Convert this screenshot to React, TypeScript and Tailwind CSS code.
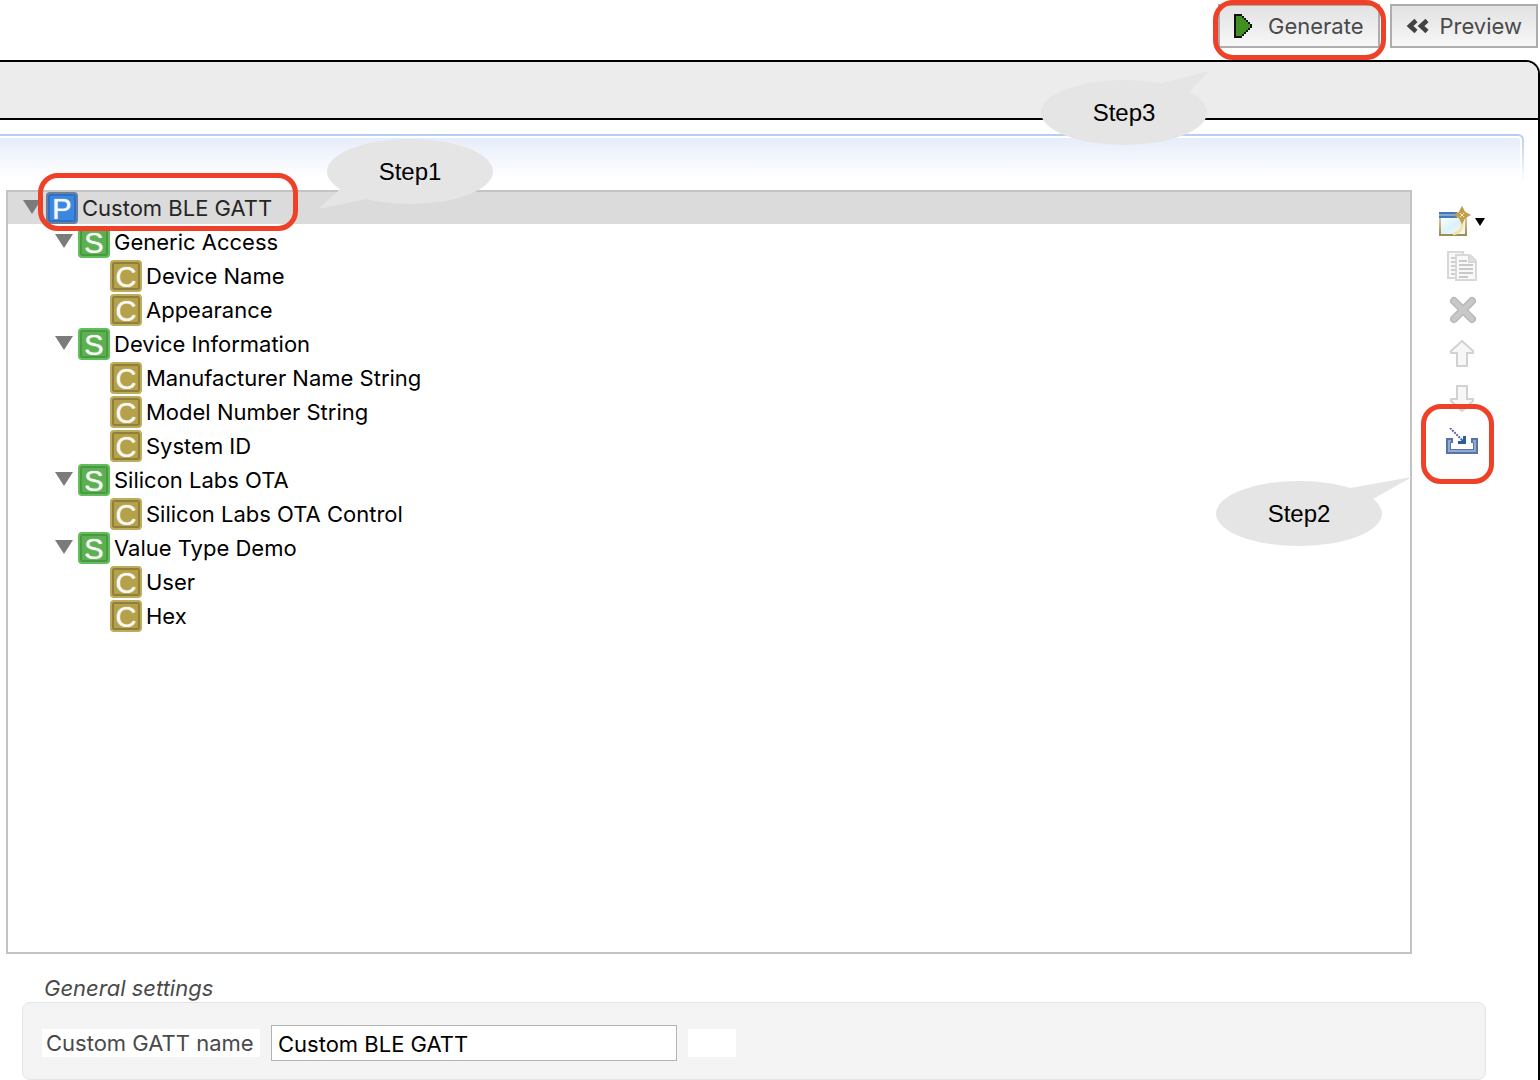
/**
 * GATT configurator — profile tree, editing toolbar and general settings,
 * with the step callouts used in the getting-started guide.
 */

import type { ReactNode } from 'react'
import clsx from 'clsx'

type NodeKind = 'profile' | 'service' | 'characteristic'

interface TreeNode {
  kind: NodeKind
  name: string
  children?: TreeNode[]
}

const PROFILE: TreeNode = {
  kind: 'profile',
  name: 'Custom BLE GATT',
  children: [
    {
      kind: 'service',
      name: 'Generic Access',
      children: [
        { kind: 'characteristic', name: 'Device Name' },
        { kind: 'characteristic', name: 'Appearance' },
      ],
    },
    {
      kind: 'service',
      name: 'Device Information',
      children: [
        { kind: 'characteristic', name: 'Manufacturer Name String' },
        { kind: 'characteristic', name: 'Model Number String' },
        { kind: 'characteristic', name: 'System ID' },
      ],
    },
    {
      kind: 'service',
      name: 'Silicon Labs OTA',
      children: [{ kind: 'characteristic', name: 'Silicon Labs OTA Control' }],
    },
    {
      kind: 'service',
      name: 'Value Type Demo',
      children: [
        { kind: 'characteristic', name: 'User' },
        { kind: 'characteristic', name: 'Hex' },
      ],
    },
  ],
}

const BADGE_LETTERS: Record<NodeKind, string> = {
  profile: 'P',
  service: 'S',
  characteristic: 'C',
}

const BADGE_STYLES: Record<NodeKind, string> = {
  profile: 'border-[#6a7f9d] bg-[#3b87e0] inset-ring-[#2f70c4]',
  service: 'border-[#62bd5b] bg-[#5cb052] inset-ring-[#489a41]',
  characteristic: 'border-[#bdac5c] bg-[#b5a149] inset-ring-[#8f7f38]',
}

/** Left padding per tree depth. */
const INDENTS = ['pl-[14px]', 'pl-[46px]', 'pl-[78px]']

/** Red rounded outline drawn over the control a step refers to. */
function Highlight({ className }: { className: string }) {
  return (
    <span
      className={clsx(
        'pointer-events-none absolute z-10 rounded-[20px] border-5 border-[#ee4128]',
        className
      )}
    />
  )
}

interface CalloutProps {
  /** Points of the tail polygon, in the bubble's own 166x65 space. */
  tail: string
  className: string
  children: ReactNode
}

function Callout({ tail, className, children }: CalloutProps) {
  return (
    <div
      className={clsx(
        'pointer-events-none absolute z-20 flex h-[65px] w-[166px] items-center justify-center',
        className
      )}
    >
      <svg className="absolute inset-0 overflow-visible" width="166" height="65" fill="#e5e5e5">
        <ellipse cx="83" cy="32.5" rx="83" ry="32.5" />
        <polygon points={tail} />
      </svg>
      <span className="relative font-['Liberation_Sans',sans-serif] text-[24px] leading-8 text-black">
        {children}
      </span>
    </div>
  )
}

function NodeBadge({ kind }: { kind: NodeKind }) {
  return (
    <span
      className={clsx(
        "flex size-8 shrink-0 items-center justify-center rounded-[4px] border-2 pt-[2px] inset-ring-2 font-['Liberation_Sans',sans-serif] text-[29px] leading-7 text-[#f6f8f4] text-shadow-[0_0_1px_#fff]",
        BADGE_STYLES[kind]
      )}
    >
      {BADGE_LETTERS[kind]}
    </span>
  )
}

function TreeItem({ node, depth = 0 }: { node: TreeNode; depth?: number }) {
  const selected = depth === 0
  return (
    <li role="treeitem" aria-selected={selected} aria-expanded={node.children ? true : undefined}>
      <div
        className={clsx(
          'relative mb-[2px] flex h-8 items-center',
          INDENTS[depth],
          selected ? 'bg-[#dbdbdb] text-[#262626]' : 'text-black'
        )}
      >
        {node.children ? (
          <button type="button" aria-label={`Collapse ${node.name}`} className="w-6">
            <svg width="20" height="16" viewBox="0 0 20 16">
              <polygon points="1,0 19,0 10,14" fill="#7b7b7b" />
            </svg>
          </button>
        ) : (
          <span className="w-6" />
        )}
        <NodeBadge kind={node.kind} />
        <span className="ml-1 whitespace-nowrap">{node.name}</span>
        {selected && (
          <>
            <Highlight className="-top-[19px] left-[30px] h-[58px] w-[260px]" />
            <Callout className="-top-[53px] left-[319px]" tail="-9,70 13,50 42,40 40,60">
              Step1
            </Callout>
          </>
        )}
      </div>
      {node.children && (
        <ul role="group">
          {node.children.map((child) => (
            <TreeItem key={child.name} node={child} depth={depth + 1} />
          ))}
        </ul>
      )}
    </li>
  )
}

function GenerateIcon() {
  return (
    <svg width="18" height="24" viewBox="0 0 9 12" shapeRendering="crispEdges">
      <path d="M0 0h4v1h1v1h1v1h1v1h1v1h1v2h-1v1h-1v1h-1v1h-1v1h-1v1H0z" fill="#111" />
      <path d="M1 1h3v1h1v1h1v1h1v1h1v2h-1v1h-1v1h-1v1h-1v1H1z" fill="#3f8f22" />
    </svg>
  )
}

function PreviewIcon() {
  return (
    <svg width="24" height="16" viewBox="0 0 24 16" fill="none" stroke="#424242" strokeWidth="4.500">
      <path d="M10 2.500 4 8l6 5.500" />
      <path d="M21 2.500 15 8l6 5.500" />
    </svg>
  )
}

function NewIcon() {
  return (
    <svg width="32" height="32" viewBox="0 -1 32 32">
      <defs>
        <linearGradient id="pane" x1="0" y1="0" x2="1" y2="1">
          <stop offset="0" stopColor="#ffffff" />
          <stop offset="0.500" stopColor="#dcf1fb" />
          <stop offset="1" stopColor="#f4fbfe" />
        </linearGradient>
        <linearGradient id="frame" x1="0" y1="0" x2="0" y2="1">
          <stop offset="0" stopColor="#e0cf9a" />
          <stop offset="1" stopColor="#a08a55" />
        </linearGradient>
      </defs>
      <rect x="1" y="9" width="26" height="19" fill="url(#pane)" stroke="url(#frame)" strokeWidth="2" />
      <rect x="0" y="5" width="18" height="6" fill="#4677b6" />
      <rect x="0" y="7" width="18" height="2" fill="#7fa8da" />
      <path d="M23 14v4c0 5-4 8-9 9" fill="none" stroke="#f8e2a0" strokeWidth="3" />
      <path
        d="M23 1l2 4 1 1 4 2-4 2-1 1-2 4-2-4-1-1-4-2 4-2 1-1z"
        fill="#f9e7ab"
        stroke="#c09a48"
        strokeWidth="2"
      />
      <path d="M23 4v8M19 8h8" stroke="#c09a48" strokeWidth="2" />
      <path d="M22 7h2v2h-2z" fill="#fdf3cf" />
    </svg>
  )
}

function CopyIcon() {
  return (
    <svg width="32" height="32" viewBox="-1 -1 32 32" fill="#f8f8f8" stroke="#d8d8d8" strokeWidth="2">
      <path d="M1 1h15v26H1z" />
      <path d="M4 7h5M4 11h5M4 15h5M4 19h5M4 23h5" stroke="#cecece" />
      <path d="M9 4h14l6 6v19H9z" />
      <path d="M22 4v7h7" fill="#dedede" />
      <path d="M12 10h8M12 14h14M12 18h14M12 22h14M12 26h9" stroke="#c9c9c9" />
    </svg>
  )
}

function DeleteIcon() {
  return (
    <svg width="28" height="28" viewBox="-1 0 28 28" fill="none">
      <path d="M5 5l18 18M23 5 5 23" stroke="#b9b9b9" strokeWidth="8" strokeLinecap="round" />
      <path d="M5 5l18 18M23 5 5 23" stroke="#c8c8c8" strokeWidth="5" strokeLinecap="round" />
    </svg>
  )
}

function ArrowIcon({ down = false }: { down?: boolean }) {
  return (
    <svg
      width="26"
      height="30"
      viewBox="0 0 26 30"
      className={down ? 'rotate-180' : undefined}
      fill="#f7f7f7"
      stroke="#d2d2d2"
      strokeWidth="2"
    >
      <path d="M13 2 24 12v2h-6v13H8V14H2v-2z" />
    </svg>
  )
}

function ImportIcon() {
  return (
    <svg width="32" height="28" viewBox="0 0 32 28">
      <path d="M0 10h7v5H5v6h22v-6h-2v-5h7v16H0z" fill="#5873a6" />
      <path d="M2 12h3v2H4v8h24v-8h-1v-2h3v12H2z" fill="#92abd4" />
      <path d="M4 0 16 12" stroke="#5a60a6" strokeWidth="2" strokeDasharray="2 1" />
      <path d="M20 8v8h-8v-3h3l2-2V8z" fill="#2a5c9c" />
    </svg>
  )
}

interface ToolButtonProps {
  label: string
  disabled?: boolean
  children: ReactNode
}

function ToolButton({ label, disabled, children }: ToolButtonProps) {
  return (
    <button
      type="button"
      aria-label={label}
      disabled={disabled}
      className="relative flex h-11 w-full items-center justify-center"
    >
      {children}
    </button>
  )
}

const HEADER_BUTTON =
  'flex h-11 items-center border-2 border-[#adadad] bg-linear-to-b from-[#e2e2e2] to-[#f7f7f7] px-[14px]'

export default function App() {
  return (
    <div className="flex min-h-screen flex-col overflow-hidden bg-white font-[Inter,sans-serif] text-[22px] leading-7 text-[#4a4a4a]">
      <header className="flex h-[60px] justify-end gap-[10px] pt-1 pr-[2px]">
        <div className="relative">
          <button type="button" className={clsx(HEADER_BUTTON, 'gap-4')}>
            <GenerateIcon />
            Generate
          </button>
          <Highlight className="-top-1 -right-[6px] -left-[5px] h-[60px]" />
        </div>
        <button type="button" className={clsx(HEADER_BUTTON, 'gap-[10px]')}>
          <PreviewIcon />
          Preview
        </button>
      </header>

      <main className="flex flex-1 flex-col rounded-tr-[14px] border-t-2 border-r-2 border-black">
        <div className="relative h-[58px] rounded-tr-[12px] border-b-2 border-black bg-[#ececec]">
          <Callout className="top-[18px] right-[331px]" tail="168,-9 121,3 120,20 148,12">
            Step3
          </Callout>
        </div>

        <section className="relative mt-[14px] mr-[14px] flex flex-1 flex-col">
          {/* Section header glow, fading out above the tree */}
          <div className="absolute inset-x-0 top-0 h-12 rounded-tr-[6px] bg-linear-to-b from-[#b4cdf3] to-white pt-[2px] pr-[2px]">
            <div className="h-full rounded-tr-[4px] border-t-2 border-r-2 border-white bg-linear-to-b from-[#e6edfa] to-white to-90%" />
          </div>

          <div className="relative mt-14 flex flex-1">
            <div className="relative ml-[6px] flex-1 border-2 border-[#c3c3c3] bg-white">
              <ul role="tree">
                <TreeItem node={PROFILE} />
              </ul>
              <Callout className="top-[289px] right-[28px]" tail="196,-4 134,7 130,25 157,18">
                Step2
              </Callout>
            </div>

            <div className="flex w-[100px] flex-col pt-[10px]" role="toolbar" aria-label="Edit tree">
              <ToolButton label="New item">
                <span className="flex items-center gap-1">
                  <NewIcon />
                  <svg width="10" height="8" viewBox="0 0 10 8">
                    <polygon points="0,0 10,0 5,8" fill="#000" />
                  </svg>
                </span>
              </ToolButton>
              <ToolButton label="Duplicate" disabled>
                <CopyIcon />
              </ToolButton>
              <ToolButton label="Delete" disabled>
                <DeleteIcon />
              </ToolButton>
              <ToolButton label="Move up" disabled>
                <ArrowIcon />
              </ToolButton>
              <ToolButton label="Move down" disabled>
                <ArrowIcon down />
              </ToolButton>
              <ToolButton label="Import">
                <ImportIcon />
                <Highlight className="-top-4 left-[9px] h-20 w-[73px]" />
              </ToolButton>
            </div>
            <div className="w-3" />
          </div>

          <h2 className="mt-5 ml-11 h-7 italic">General settings</h2>
          <div className="mr-[38px] ml-[22px] flex h-[78px] items-center rounded-lg border border-[#e4e4e4] bg-[#f4f4f4] pt-[3px] pl-[19px]">
            <label htmlFor="gatt-name" className="h-7 w-[218px] bg-white pl-1 whitespace-nowrap">
              Custom GATT name
            </label>
            <input
              id="gatt-name"
              type="text"
              defaultValue="Custom BLE GATT"
              className="ml-[11px] h-9 w-[406px] border border-[#b3b3b3] bg-white px-[6px] pt-[2px] text-black"
            />
            <span className="ml-[11px] h-7 w-12 bg-white" />
          </div>
        </section>
      </main>
    </div>
  )
}
